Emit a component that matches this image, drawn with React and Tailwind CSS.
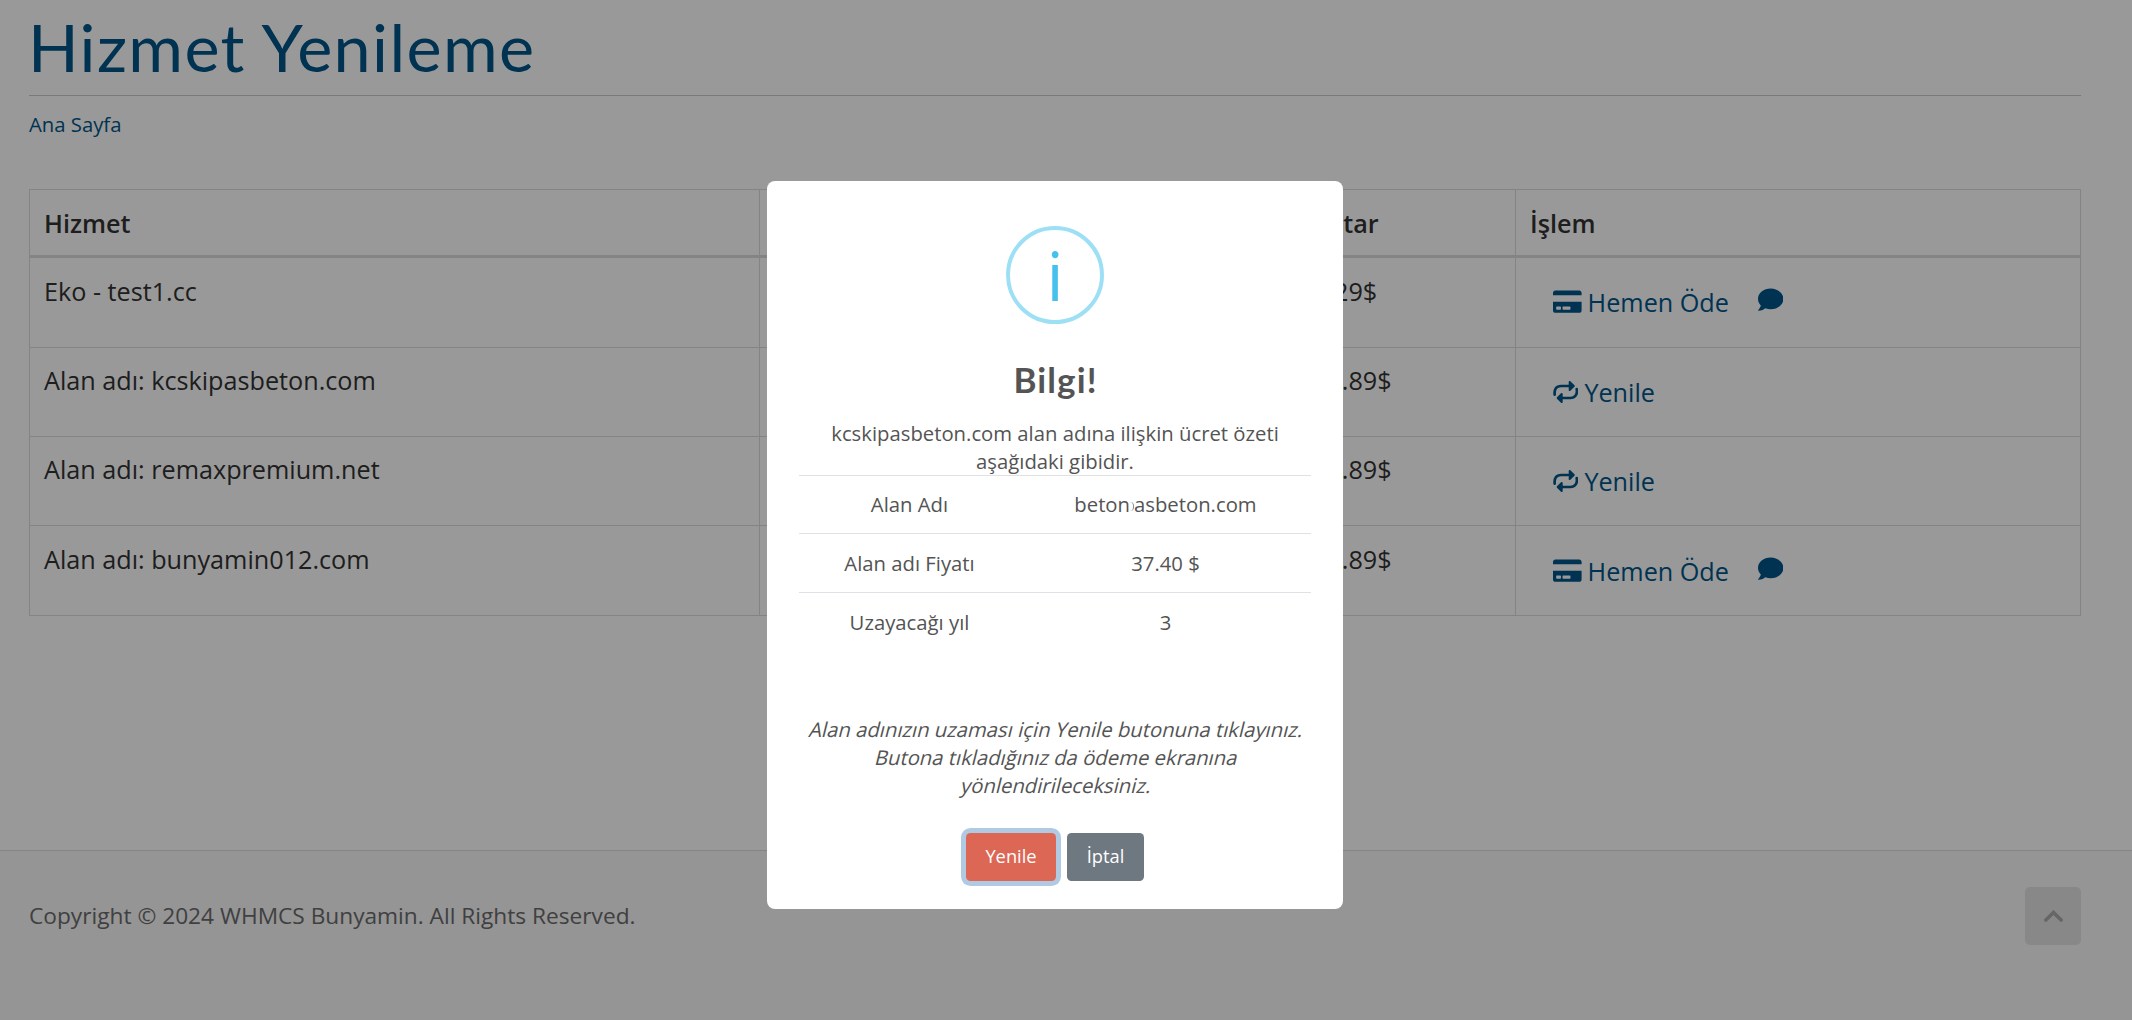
import React from 'react';
import { FaCreditCard, FaComment } from 'react-icons/fa';

const services = [
  { name: 'Eko - test1.cc', price: '5.29$', unpaid: true, row: 'h-[89px] pt-[14px]', action: 'pt-[11px]' },
  { name: 'Alan adı: kcskipasbeton.com', price: '12.89$', unpaid: false, row: 'h-[88px] pt-[13px]', action: 'pt-[12px]' },
  { name: 'Alan adı: remaxpremium.net', price: '12.89$', unpaid: false, row: 'h-[88px] pt-[13px]', action: 'pt-[12px]' },
  { name: 'Alan adı: bunyamin012.com', price: '12.89$', unpaid: true, row: 'h-[89px] pt-[14px]', action: 'pt-[12px]' },
];

const columns = 'grid grid-cols-[730px_538px_218px_1fr]';

function RepeatIcon() {
  return (
    <svg viewBox="0 0 76 72" className="h-[24px] w-[25.4px]" fill="none" stroke="currentColor" strokeWidth="8" strokeLinecap="round" strokeLinejoin="round">
      <path d="M5 44C3 28 10 18 24 18H60" />
      <path d="M50 6L62 18L50 30Z" fill="currentColor" strokeWidth="6" />
      <path d="M71 27C74 43 66 54 52 54H16" />
      <path d="M26 42L14 54L26 66Z" fill="currentColor" strokeWidth="6" />
    </svg>
  );
}

function Action({ unpaid }) {
  if (!unpaid) {
    return (
      <a className="flex items-center gap-[6px]">
        <RepeatIcon />
        Yenile
      </a>
    );
  }
  return (
    <>
      <a className="flex items-center gap-[6px]">
        <FaCreditCard className="h-[25.4px] w-[28.6px]" />
        Hemen Öde
      </a>
      <FaComment className="mb-[5px] ml-[29px] size-[25.4px]" />
    </>
  );
}

function ServiceTable() {
  return (
    <div className="mt-[48px] w-[2052px] border-l border-t border-[#dddddd] text-[25.2px] leading-[38px] text-[#333333]">
      <div className={`${columns} h-[68px] border-b-[3px] border-[#dddddd] font-semibold`}>
        <div className="flex items-center border-r border-[#dddddd] px-[14px]">Hizmet</div>
        <div />
        <div className="flex items-center border-r border-[#dddddd] px-[15px]">Tutar</div>
        <div className="flex items-center border-r border-[#dddddd] px-[14px]">İşlem</div>
      </div>
      {services.map((s) => (
        <div key={s.name} className={`${columns} border-b border-[#dddddd]`}>
          <div className={`${s.row} border-r border-[#dddddd] px-[14px]`}>{s.name}</div>
          <div />
          <div className={`${s.row} border-r border-[#dddddd] px-[15px]`}>{s.price}</div>
          <div className={`${s.row} border-r border-[#dddddd] pl-[37px] text-[#005588]`}>
            <div className={`${s.action} flex items-center`}>
              <Action unpaid={s.unpaid} />
            </div>
          </div>
        </div>
      ))}
    </div>
  );
}

function Modal() {
  return (
    <div className="flex h-[728px] w-[576px] flex-col items-center rounded-lg bg-white px-8 text-center text-[20.3px] leading-7 text-[#545454]">
      <div className="mt-[45px] flex size-[98px] shrink-0 items-center justify-center rounded-full border-4 border-[#9de0f6] text-[68px] leading-none text-[#46c1ed]">
        i
      </div>
      <h2 className="mt-[35px] h-[40px] pl-[1px] font-['Lato',sans-serif] text-[35px] font-bold leading-[40px] tracking-[1.1px]">Bilgi!</h2>
      <p className="mt-[20px] w-[470px]">kcskipasbeton.com alan adına ilişkin ücret özeti aşağıdaki gibidir.</p>
      <div className="grid w-[512px] grid-cols-[221px_291px]">
        <div className="flex h-[58px] items-center justify-center border-t border-[#dee2e6] pb-px">Alan Adı</div>
        <div className="flex h-[58px] items-center justify-center border-t border-[#dee2e6] pb-px">
          beton
          <span className="mt-[4px] h-[9px] w-[4px] rounded-r-full border-r border-[#8a8a8a]" />
          asbeton.com
        </div>
        <div className="flex h-[59px] items-center justify-center border-t border-[#dee2e6]">Alan adı Fiyatı</div>
        <div className="flex h-[59px] items-center justify-center border-t border-[#dee2e6]">37.40 $</div>
        <div className="flex h-[59px] items-center justify-center border-t border-[#dee2e6]">Uzayacağı yıl</div>
        <div className="flex h-[59px] items-center justify-center border-t border-[#dee2e6]">3</div>
      </div>
      <div className="mt-[64px] whitespace-nowrap">
        <p className="origin-[50%_22px] -skew-x-[14deg]">Alan adınızın uzaması için Yenile butonuna tıklayınız.</p>
        <p className="origin-[50%_22px] -skew-x-[14deg]">Butona tıkladığınız da ödeme ekranına</p>
        <p className="origin-[50%_22px] -skew-x-[14deg]">yönlendirileceksiniz.</p>
      </div>
      <div className="mt-[34px] flex gap-[11px] text-[18.3px] font-medium leading-none text-white">
        <button className="h-[48px] w-[90px] rounded-[4.5px] bg-[#dd6755] pb-[2px] shadow-[0_0_0_5px_rgba(100,150,200,0.5)]">Yenile</button>
        <button className="h-[48px] w-[77px] rounded-[4.5px] bg-[#6e7881] pb-[2px]">İptal</button>
      </div>
    </div>
  );
}

export default function App() {
  return (
    <div className="relative flex h-[1020px] w-[2132px] flex-col overflow-hidden bg-white font-['Open_Sans',sans-serif]">
      <main className="flex h-[850px] flex-col pl-[29px]">
        <h1 className="-ml-px h-[95px] font-['Lato',sans-serif] text-[66.5px] leading-[92px] tracking-[1.35px] text-[#005588]">Hizmet Yenileme</h1>
        <div className="w-[2052px] border-t border-[#cccccc]" />
        <a className="mt-[14px] h-[31px] text-[20.3px] leading-[28px] text-[#005588]">Ana Sayfa</a>
        <ServiceTable />
      </main>
      <footer className="flex h-[170px] items-start justify-between border-t border-[#dddddd] bg-[#f8f8f8] pl-[29px] pr-[51px] pt-[36px]">
        <p className="text-[22.7px] leading-[58px] text-[#6b6b6b]">Copyright © 2024 WHMCS Bunyamin. All Rights Reserved.</p>
        <a className="flex h-[58px] w-[56px] items-center justify-center rounded-[5px] bg-[#e3e3e3] text-[#aaaaaa]">
          <svg viewBox="0 0 19 12" className="mb-px h-[12px] w-[19px]" fill="none" stroke="currentColor" strokeWidth="3.6" strokeLinecap="round" strokeLinejoin="miter">
            <path d="M1.9 10L9.5 2.5L17.1 10" />
          </svg>
        </a>
      </footer>
      <div className="absolute inset-0 flex items-start justify-center bg-black/40 pr-[22px] pt-[181px]">
        <Modal />
      </div>
    </div>
  );
}
